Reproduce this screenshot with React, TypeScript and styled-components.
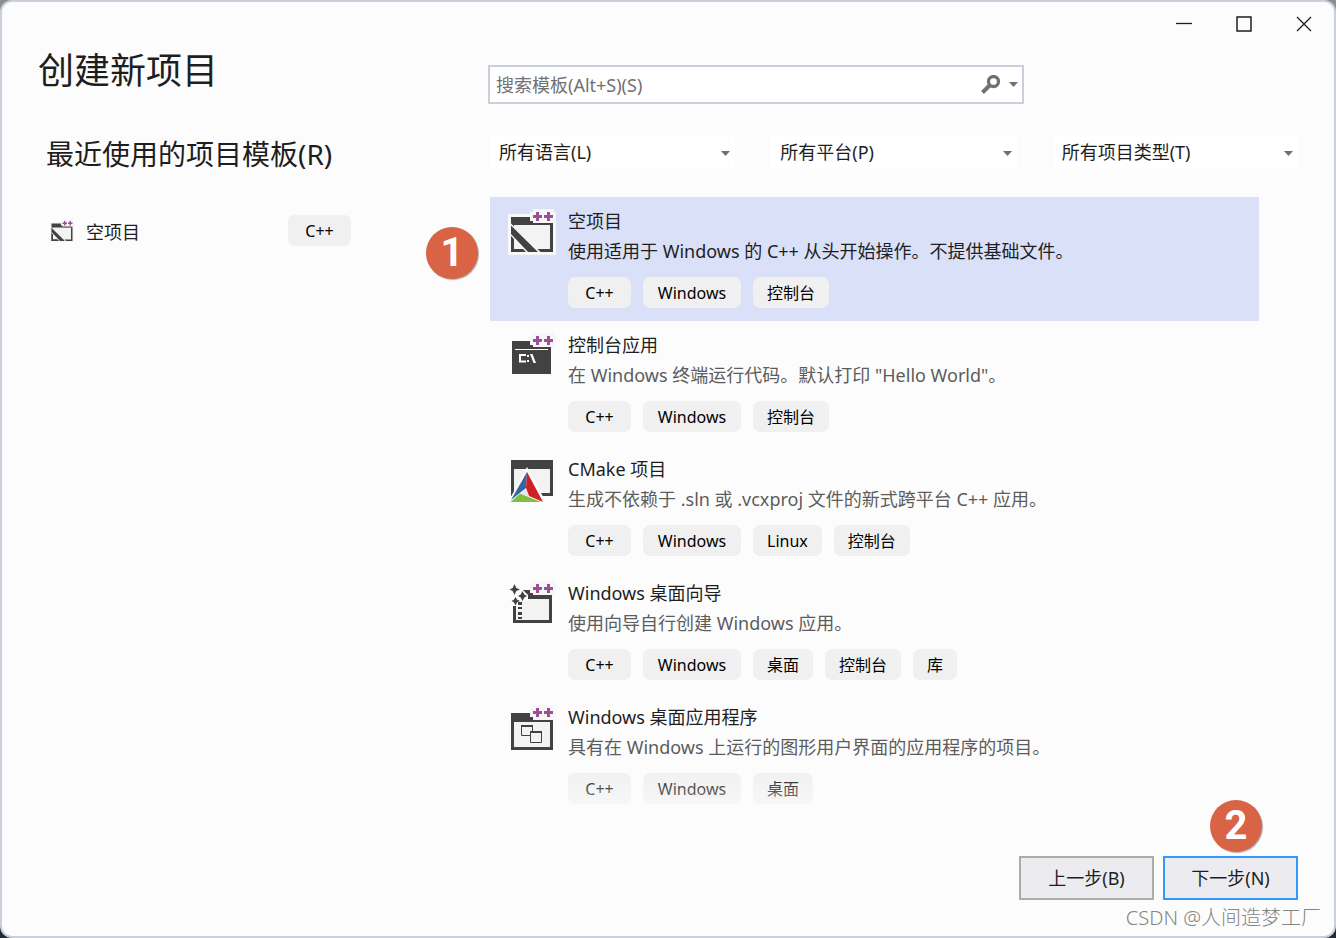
import React from "react";
import styled, { createGlobalStyle } from "styled-components";

const GlobalStyle = createGlobalStyle`
  * { box-sizing: border-box; }
  body {
    margin: 0;
    background: linear-gradient(#8a9090 50%, #1f2b35 50%);
    font-family: "Noto Sans", "Noto Sans CJK SC", sans-serif;
    font-size: 18px;
    font-weight: 400;
    color: #1e1e1e;
  }
  button, input, select { font: inherit; color: inherit; }
  h1, h2, ul { margin: 0; padding: 0; font-weight: inherit; }
`;

const Window = styled.div`
  position: relative;
  display: flex;
  flex-direction: column;
  min-height: 100vh;
  background: #fcfcfc;
  border: 2px solid #cccedb;
  border-radius: 12px;
`;

const TitleBar = styled.header`
  display: flex;
  justify-content: flex-end;
  height: 44px;
`;

const CaptionButton = styled.button`
  display: grid;
  place-items: center;
  width: 60px;
  padding: 0;
  border: 0;
  background: transparent;
`;

const Main = styled.main`
  display: grid;
  grid-template-columns: 450px minmax(0, 1fr);
  flex: 1;
  padding: 0 36px;
`;

const Sidebar = styled.section`
  display: flex;
  flex-direction: column;
`;

const Title = styled.h1`
  font-size: 36px;
  line-height: 50px;
`;

const Heading = styled.h2`
  margin-top: 38px;
  padding-left: 8px;
  font-size: 28px;
  line-height: 40px;
`;

const RecentItem = styled.button`
  display: flex;
  align-items: center;
  gap: 12px;
  width: 301px;
  margin: 41px 0 0 12px;
  padding: 0;
  border: 0;
  background: transparent;
`;

const RecentName = styled.span`
  flex: 1;
  text-align: left;
`;

const Content = styled.section`
  padding-top: 19px;
`;

const SearchBox = styled.div`
  display: flex;
  align-items: center;
  width: 536px;
  max-width: 100%;
  height: 39px;
  padding-right: 4px;
  background: #fff;
  border: 2px solid #cccedb;
`;

const SearchInput = styled.input`
  flex: 1;
  min-width: 0;
  height: 100%;
  padding: 0 6px;
  border: 0;
  outline: 0;
  background: transparent;
  &::placeholder { color: #717171; opacity: 1; }
`;

const SearchButton = styled.button`
  display: flex;
  align-items: center;
  gap: 8px;
  padding: 0;
  border: 0;
  background: transparent;
`;

const Filters = styled.div`
  display: grid;
  grid-template-columns: repeat(3, minmax(0, 1fr));
  gap: 36px;
  margin-top: 32px;
  padding-left: 2px;
`;

const Filter = styled.label`
  display: grid;
  align-items: center;
  background: #fff;
  > * { grid-area: 1 / 1; }
  svg { justify-self: end; margin: 1px 5px 0 0; pointer-events: none; }
`;

const FilterSelect = styled.select`
  appearance: none;
  width: 100%;
  height: 33px;
  padding: 0 9px 2px;
  border: 0;
  background: transparent;
`;

const Results = styled.div`
  position: relative;
  margin: 28px 39px 0 2px;
`;

const TemplateList = styled.ul`
  list-style: none;
`;

const BottomFade = styled.div`
  position: absolute;
  inset: auto 0 0 0;
  height: 52px;
  background: linear-gradient(rgba(252, 252, 252, 0), rgba(252, 252, 252, 0.7));
  pointer-events: none;
`;

const Template = styled.button<{ $selected: boolean }>`
  display: flex;
  align-items: flex-start;
  gap: 12px;
  width: 100%;
  padding: 9px 18px 13px;
  border: 0;
  text-align: left;
  background: ${(p) => (p.$selected ? "#d9e0f8" : "transparent")};
  > svg { margin-top: 2px; }
`;

const TemplateText = styled.span`
  display: flex;
  flex-direction: column;
  min-width: 0;
  line-height: 30px;
`;

const Description = styled.span<{ $selected: boolean }>`
  color: ${(p) => (p.$selected ? "#1e1e1e" : "#5c5c5c")};
`;

const Tags = styled.span`
  display: flex;
  gap: 12px;
  margin-top: 11px;
`;

const Tag = styled.span<{ $minWidth?: number }>`
  min-width: ${(p) => p.$minWidth ?? 0}px;
  padding: 2px 14px 0;
  border-radius: 7px;
  background: #f0f0f0;
  color: #000;
  font-size: 16px;
  line-height: 29px;
  text-align: center;
`;

const Footer = styled.footer`
  display: flex;
  justify-content: flex-end;
  gap: 9px;
  padding: 39px 36px 36px;
`;

const FooterSlot = styled.div`
  position: relative;
`;

const FooterButton = styled.button<{ $primary?: boolean }>`
  width: 135px;
  height: 44px;
  padding: 0 0 2px;
  background: #ececf0;
  border: 2px solid ${(p) => (p.$primary ? "#3399ff" : "#acacac")};
`;

const StepBadge = styled.span<{ $top: number; $left: number }>`
  position: absolute;
  top: ${(p) => p.$top}px;
  left: ${(p) => p.$left}px;
  width: 52px;
  height: 52px;
  border-radius: 50%;
  background: #d96345;
  box-shadow: 1px 1px 1px rgba(0, 0, 0, 0.3);
  color: #fff;
  font: bold 40px/52px Roboto, sans-serif;
  text-align: center;
`;

const Watermark = styled.span`
  position: absolute;
  right: 13px;
  bottom: 3px;
  color: #858585;
  font-size: 20px;
  font-weight: 300;
  line-height: 30px;
`;

const DARK = "#424242";
const LIGHT = "#f3f3f3";
const PURPLE = "#9b4f96";

const Arrow = () => (
  <svg width="9" height="5" viewBox="0 0 9 5" aria-hidden="true">
    <path d="M0 0H9L4.5 5Z" fill="#717171" />
  </svg>
);

const PlusPlus = () => (
  <>
    <path d="M25 1H46V4H48V13H46V17H25V13H22V4H25Z" fill="#f6f6f6" />
    <path
      d="M28 4H31V7H34V10H31V13H28V10H25V7H28ZM39 4H42V7H45V10H42V13H39V10H36V7H39Z"
      fill={PURPLE}
    />
  </>
);

const IconSvg = styled.svg`
  flex-shrink: 0;
`;

const Icon = ({ size = 48, children }: { size?: number; children: React.ReactNode }) => (
  <IconSvg width={size} height={size} viewBox="0 0 48 48" aria-hidden="true">
    {children}
  </IconSvg>
);

const EmptyIcon = ({ size }: { size?: number }) => (
  <Icon size={size}>
    <path d="M0 6H48V47H0Z" fill="#f8f8f8" />
    <path d="M3 9H45V44H3Z" fill={DARK} />
    <path d="M6 17H42V41H6Z" fill={LIGHT} />
    <path d="M3 15.500L33 44.500H18L3 28Z" fill="#f8f8f8" />
    <path d="M3 17.500V26L20 44H30Z" fill={DARK} />
    <path d="M3 28.500L6 31.500V41H15L18 44H3Z" fill={DARK} />
    <PlusPlus />
    <path d="M25 15H45V17H25Z" fill={DARK} />
  </Icon>
);

const ConsoleIcon = () => (
  <Icon>
    <path d="M4 9H43V42H4Z" fill={DARK} />
    <PlusPlus />
    <path d="M22 15H43V18H22Z" fill={DARK} />
    <path d="M7 17.500H40" stroke="#fff" />
    <path d="M18 23H12V29.500H18" fill="none" stroke="#fff" strokeWidth="2" />
    <path d="M19 23H21V25H19ZM19 28H21V30H19ZM22 22H24.500L28 31H25.500Z" fill="#fff" />
  </Icon>
);

const CMakeIcon = () => (
  <Icon>
    <path d="M3 4H45V40H3Z" fill={DARK} />
    <path d="M6 13H42V37H6Z" fill={LIGHT} />
    <path d="M19 11L-1 48H39Z" fill="#fcfcfc" />
    <path d="M19 16L3 44L18 32Z" fill="#3465a8" />
    <path d="M19 16L35 46L21 40L18 32Z" fill="#cf2027" />
    <path d="M12 37.500L2.500 46H33Z" fill="#7fbf43" />
    <path d="M18 33L13 37.500L21 40.500Z" fill="#e6e6e8" />
  </Icon>
);

const WizardIcon = () => (
  <Icon>
    <path d="M16 10H26V14H44V43H5V25H8V16H16Z" fill={DARK} />
    <path d="M17 19H41V40H8V19Z" fill={LIGHT} />
    <path d="M0 4H14L20 10V21H12V26H2L0 20Z" fill="#fcfcfc" />
    <path d="M10 22H14V25H10ZM10 27H14V29H10ZM10 32H14V35H10ZM10 37H14V39H10Z" fill={DARK} />
    <path d="M15 10H24V16H21L18 13Z" fill={DARK} />
    <path
      d="M6.500 4L8.300 8L12 9.500L8.300 11L6.500 15L4.700 11L1.500 9.500L4.700 8ZM14.500 11L16.300 14.400L19 16L16.300 17.600L14.500 21L12.700 17.600L10 16L12.700 14.400ZM7.500 17L9.200 19.700L12 21L9.200 22.300L7.500 25.500L5.800 22.300L3.500 21L5.800 19.700Z"
      fill={DARK}
    />
    <PlusPlus />
    <path d="M25 15H44V18H25Z" fill={DARK} />
  </Icon>
);

const DesktopIcon = () => (
  <Icon>
    <path d="M3 9H45V46H3Z" fill={DARK} />
    <path d="M6 18H42V43H6Z" fill={LIGHT} />
    <path d="M13.500 22.500H24.500V31.500H13.500Z" fill={LIGHT} stroke={DARK} />
    <path d="M13 21H25V23H13Z" fill={DARK} />
    <path d="M22.500 28.500H33.500V38.500H22.500Z" fill={LIGHT} stroke={DARK} />
    <path d="M22 27H34V29H22Z" fill={DARK} />
    <PlusPlus />
    <path d="M25 16H45V18H25Z" fill={DARK} />
  </Icon>
);

const tagMinWidths: Record<string, number> = { "C++": 63, Windows: 98, Linux: 68 };

const templates = [
  {
    name: "空项目",
    description: "使用适用于 Windows 的 C++ 从头开始操作。不提供基础文件。",
    tags: ["C++", "Windows", "控制台"],
    icon: <EmptyIcon />,
  },
  {
    name: "控制台应用",
    description: "在 Windows 终端运行代码。默认打印 \"Hello World\"。",
    tags: ["C++", "Windows", "控制台"],
    icon: <ConsoleIcon />,
  },
  {
    name: "CMake 项目",
    description: "生成不依赖于 .sln 或 .vcxproj 文件的新式跨平台 C++ 应用。",
    tags: ["C++", "Windows", "Linux", "控制台"],
    icon: <CMakeIcon />,
  },
  {
    name: "Windows 桌面向导",
    description: "使用向导自行创建 Windows 应用。",
    tags: ["C++", "Windows", "桌面", "控制台", "库"],
    icon: <WizardIcon />,
  },
  {
    name: "Windows 桌面应用程序",
    description: "具有在 Windows 上运行的图形用户界面的应用程序的项目。",
    tags: ["C++", "Windows", "桌面"],
    icon: <DesktopIcon />,
  },
];

const filters = ["所有语言(L)", "所有平台(P)", "所有项目类型(T)"];

export default function App() {
  const [selected, setSelected] = React.useState(0);
  return (
    <>
      <GlobalStyle />
      <Window>
        <TitleBar>
          <CaptionButton type="button" aria-label="最小化">
            <svg width="16" height="16" viewBox="0 0 16 16">
              <path d="M0 7.500H16" stroke="#1e1e1e" strokeWidth="1.300" />
            </svg>
          </CaptionButton>
          <CaptionButton type="button" aria-label="最大化">
            <svg width="16" height="16" viewBox="0 0 16 16">
              <path d="M1 1H15V15H1Z" fill="none" stroke="#1e1e1e" strokeWidth="1.500" />
            </svg>
          </CaptionButton>
          <CaptionButton type="button" aria-label="关闭">
            <svg width="16" height="16" viewBox="0 0 16 16">
              <path d="M1 1L15 15M15 1L1 15" stroke="#1e1e1e" strokeWidth="1.300" />
            </svg>
          </CaptionButton>
        </TitleBar>
        <Main>
          <Sidebar>
            <Title>创建新项目</Title>
            <Heading>最近使用的项目模板(R)</Heading>
            <RecentItem type="button">
              <EmptyIcon size={24} />
              <RecentName>空项目</RecentName>
              <Tag $minWidth={tagMinWidths["C++"]}>C++</Tag>
            </RecentItem>
          </Sidebar>
          <Content>
            <SearchBox>
              <SearchInput type="text" aria-label="搜索模板" placeholder="搜索模板(Alt+S)(S)" />
              <SearchButton type="button" aria-label="搜索">
                <svg width="20" height="20" viewBox="0 0 20 20">
                  <circle cx="12.500" cy="6.500" r="5" fill="none" stroke="#717171" strokeWidth="3.300" />
                  <path d="M9 10L1.500 17.500" stroke="#717171" strokeWidth="4" />
                </svg>
                <Arrow />
              </SearchButton>
            </SearchBox>
            <Filters>
              {filters.map((label) => (
                <Filter key={label}>
                  <FilterSelect aria-label={label}>
                    <option>{label}</option>
                  </FilterSelect>
                  <Arrow />
                </Filter>
              ))}
            </Filters>
            <Results>
              <TemplateList>
                {templates.map((t, i) => (
                  <li key={t.name}>
                    <Template
                      type="button"
                      $selected={i === selected}
                      aria-pressed={i === selected}
                      onClick={() => setSelected(i)}
                    >
                      {t.icon}
                      <TemplateText>
                        <span>{t.name}</span>
                        <Description $selected={i === selected}>{t.description}</Description>
                        <Tags>
                          {t.tags.map((tag) => (
                            <Tag key={tag} $minWidth={tagMinWidths[tag]}>
                              {tag}
                            </Tag>
                          ))}
                        </Tags>
                      </TemplateText>
                    </Template>
                  </li>
                ))}
              </TemplateList>
              <BottomFade />
              <StepBadge $top={30} $left={-64}>1</StepBadge>
            </Results>
          </Content>
        </Main>
        <Footer>
          <FooterButton type="button">上一步(B)</FooterButton>
          <FooterSlot>
            <FooterButton type="button" $primary>下一步(N)</FooterButton>
            <StepBadge $top={-56} $left={47}>2</StepBadge>
          </FooterSlot>
        </Footer>
        <Watermark>CSDN @人间造梦工厂</Watermark>
      </Window>
    </>
  );
}
